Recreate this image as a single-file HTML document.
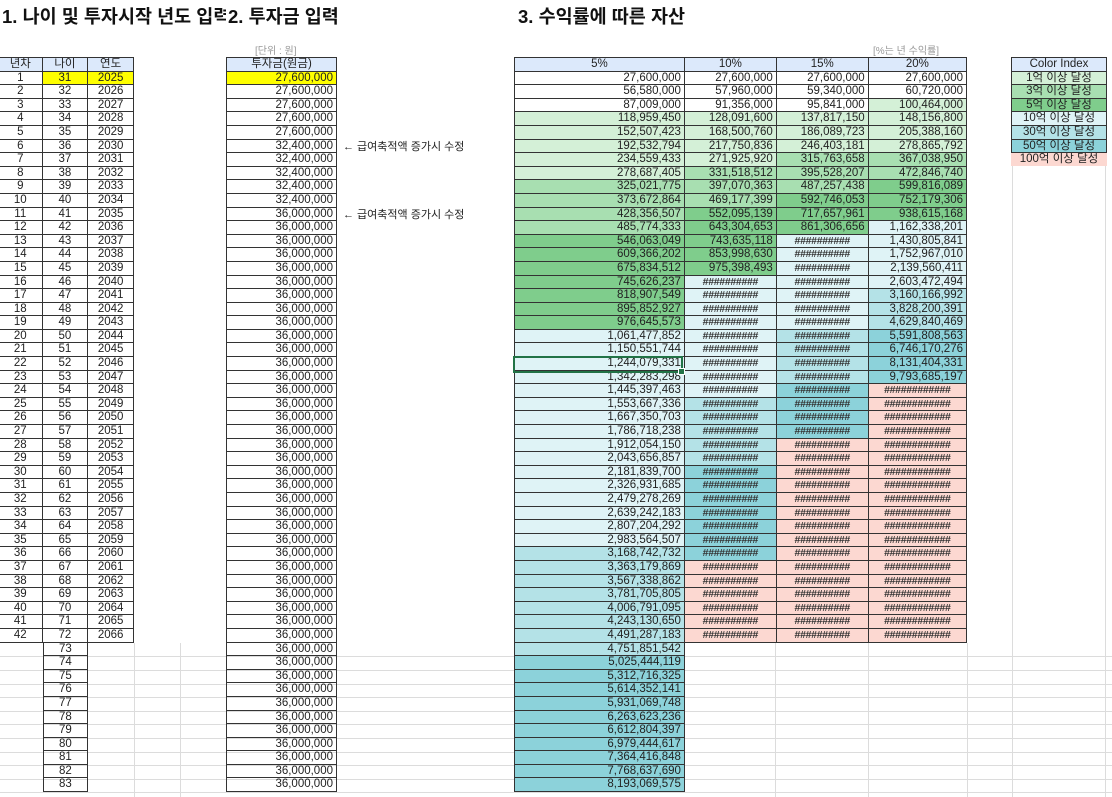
<!DOCTYPE html>
<html><head><meta charset="utf-8">
<style>
*{margin:0;padding:0;box-sizing:content-box}
body{width:1112px;height:797px;background:#fff;position:relative;overflow:hidden;font-family:"Liberation Sans","Noto Sans CJK KR",sans-serif;color:#222}
.t{position:absolute;font-weight:bold;font-size:18.5px;top:3px;white-space:nowrap;color:#111;font-family:"Liberation Sans","Noto Sans CJK KR",sans-serif}
.n{position:absolute;font-size:10px;color:#999;white-space:nowrap}
table{position:absolute;border-collapse:separate;border-spacing:0;table-layout:fixed;font-size:11.5px}
td{height:12.6px;line-height:12.6px;padding:0 3px;border-right:1px solid #333;border-bottom:1px solid #333;white-space:nowrap;overflow:hidden;text-align:right}
tr:first-child td{border-top:1px solid #333}
td:first-child{border-left:1px solid #333}
.h td{background:#dce9fb;text-align:center}
.c td{text-align:center}
.y{background:#ffff00}
.e{border:none!important;background:transparent!important}
.bl{border-left:1px solid #333}
.g1{background:#d4f0d7}.g2{background:#a8dfb1}.g3{background:#7fcd8c}
.c1{background:#dff3f6}.c2{background:#b4e2e7}.c3{background:#8cd2da}.p{background:#fcd8d1}
.hs td.x{text-align:center;letter-spacing:-0.3px;font-weight:bold;font-size:10.5px;color:#333}
.gl{position:absolute;background:#dcdcdc}
.ann{position:absolute;left:343px;font-size:11px;white-space:nowrap}
</style></head><body>
<div class="gl" style="left:0;top:656px;width:1112px;height:1px"></div>
<div class="gl" style="left:0;top:670px;width:1112px;height:1px"></div>
<div class="gl" style="left:0;top:684px;width:1112px;height:1px"></div>
<div class="gl" style="left:0;top:697px;width:1112px;height:1px"></div>
<div class="gl" style="left:0;top:711px;width:1112px;height:1px"></div>
<div class="gl" style="left:0;top:724px;width:1112px;height:1px"></div>
<div class="gl" style="left:0;top:738px;width:1112px;height:1px"></div>
<div class="gl" style="left:0;top:752px;width:1112px;height:1px"></div>
<div class="gl" style="left:0;top:765px;width:1112px;height:1px"></div>
<div class="gl" style="left:0;top:779px;width:1112px;height:1px"></div>
<div class="gl" style="left:0;top:792px;width:1112px;height:1px"></div>
<div class="gl" style="left:134px;top:643px;width:1px;height:154px"></div>
<div class="gl" style="left:180px;top:643px;width:1px;height:154px"></div>
<div class="gl" style="left:775px;top:643px;width:1px;height:154px"></div>
<div class="gl" style="left:868px;top:643px;width:1px;height:154px"></div>
<div class="gl" style="left:967px;top:643px;width:1px;height:154px"></div>
<div class="gl" style="left:1012px;top:160px;width:1px;height:637px"></div>
<div class="gl" style="left:1105px;top:160px;width:1px;height:637px"></div>

<div class="t" style="left:2px;width:224px;overflow:hidden">1. 나이 및 투자시작 년도 입력</div>
<div class="t" style="left:228px">2. 투자금 입력</div>
<div class="t" style="left:518px">3. 수익률에 따른 자산</div>
<div class="n" style="left:255px;top:42px">[단위 : 원]</div>
<div class="n" style="left:873px;top:42px">[%는 년 수익률]</div>
<div class="ann" style="top:138px">← 급여축적액 증가시 수정</div>
<div class="ann" style="top:206px">← 급여축적액 증가시 수정</div>

<table class="c" style="left:-2px;top:57px;width:136px">
<colgroup><col style="width:38px"><col style="width:39px"><col style="width:39px"></colgroup>
<tr class="h"><td>년차</td><td>나이</td><td>연도</td></tr>
<tr><td>1</td><td class="y">31</td><td class="y">2025</td></tr>
<tr><td>2</td><td>32</td><td>2026</td></tr><tr><td>3</td><td>33</td><td>2027</td></tr><tr><td>4</td><td>34</td><td>2028</td></tr><tr><td>5</td><td>35</td><td>2029</td></tr><tr><td>6</td><td>36</td><td>2030</td></tr><tr><td>7</td><td>37</td><td>2031</td></tr><tr><td>8</td><td>38</td><td>2032</td></tr><tr><td>9</td><td>39</td><td>2033</td></tr><tr><td>10</td><td>40</td><td>2034</td></tr><tr><td>11</td><td>41</td><td>2035</td></tr><tr><td>12</td><td>42</td><td>2036</td></tr><tr><td>13</td><td>43</td><td>2037</td></tr><tr><td>14</td><td>44</td><td>2038</td></tr><tr><td>15</td><td>45</td><td>2039</td></tr><tr><td>16</td><td>46</td><td>2040</td></tr><tr><td>17</td><td>47</td><td>2041</td></tr><tr><td>18</td><td>48</td><td>2042</td></tr><tr><td>19</td><td>49</td><td>2043</td></tr><tr><td>20</td><td>50</td><td>2044</td></tr><tr><td>21</td><td>51</td><td>2045</td></tr><tr><td>22</td><td>52</td><td>2046</td></tr><tr><td>23</td><td>53</td><td>2047</td></tr><tr><td>24</td><td>54</td><td>2048</td></tr><tr><td>25</td><td>55</td><td>2049</td></tr><tr><td>26</td><td>56</td><td>2050</td></tr><tr><td>27</td><td>57</td><td>2051</td></tr><tr><td>28</td><td>58</td><td>2052</td></tr><tr><td>29</td><td>59</td><td>2053</td></tr><tr><td>30</td><td>60</td><td>2054</td></tr><tr><td>31</td><td>61</td><td>2055</td></tr><tr><td>32</td><td>62</td><td>2056</td></tr><tr><td>33</td><td>63</td><td>2057</td></tr><tr><td>34</td><td>64</td><td>2058</td></tr><tr><td>35</td><td>65</td><td>2059</td></tr><tr><td>36</td><td>66</td><td>2060</td></tr><tr><td>37</td><td>67</td><td>2061</td></tr><tr><td>38</td><td>68</td><td>2062</td></tr><tr><td>39</td><td>69</td><td>2063</td></tr><tr><td>40</td><td>70</td><td>2064</td></tr><tr><td>41</td><td>71</td><td>2065</td></tr><tr><td>42</td><td>72</td><td>2066</td></tr>
<tr><td class="e"></td><td class="bl">73</td><td class="e"></td></tr><tr><td class="e"></td><td class="bl">74</td><td class="e"></td></tr><tr><td class="e"></td><td class="bl">75</td><td class="e"></td></tr><tr><td class="e"></td><td class="bl">76</td><td class="e"></td></tr><tr><td class="e"></td><td class="bl">77</td><td class="e"></td></tr><tr><td class="e"></td><td class="bl">78</td><td class="e"></td></tr><tr><td class="e"></td><td class="bl">79</td><td class="e"></td></tr><tr><td class="e"></td><td class="bl">80</td><td class="e"></td></tr><tr><td class="e"></td><td class="bl">81</td><td class="e"></td></tr><tr><td class="e"></td><td class="bl">82</td><td class="e"></td></tr><tr><td class="e"></td><td class="bl">83</td><td class="e"></td></tr>
</table>

<table style="left:226px;top:57px;width:111px">
<colgroup><col style="width:103px"></colgroup>
<tr class="h"><td>투자금(원금)</td></tr>
<tr><td class="y">27,600,000</td></tr><tr><td>27,600,000</td></tr><tr><td>27,600,000</td></tr><tr><td>27,600,000</td></tr><tr><td>27,600,000</td></tr>
<tr><td>32,400,000</td></tr><tr><td>32,400,000</td></tr><tr><td>32,400,000</td></tr><tr><td>32,400,000</td></tr><tr><td>32,400,000</td></tr>
<tr><td>36,000,000</td></tr><tr><td>36,000,000</td></tr><tr><td>36,000,000</td></tr><tr><td>36,000,000</td></tr><tr><td>36,000,000</td></tr><tr><td>36,000,000</td></tr><tr><td>36,000,000</td></tr><tr><td>36,000,000</td></tr><tr><td>36,000,000</td></tr><tr><td>36,000,000</td></tr><tr><td>36,000,000</td></tr><tr><td>36,000,000</td></tr><tr><td>36,000,000</td></tr><tr><td>36,000,000</td></tr><tr><td>36,000,000</td></tr><tr><td>36,000,000</td></tr><tr><td>36,000,000</td></tr><tr><td>36,000,000</td></tr><tr><td>36,000,000</td></tr><tr><td>36,000,000</td></tr><tr><td>36,000,000</td></tr><tr><td>36,000,000</td></tr><tr><td>36,000,000</td></tr><tr><td>36,000,000</td></tr><tr><td>36,000,000</td></tr><tr><td>36,000,000</td></tr><tr><td>36,000,000</td></tr><tr><td>36,000,000</td></tr><tr><td>36,000,000</td></tr><tr><td>36,000,000</td></tr><tr><td>36,000,000</td></tr><tr><td>36,000,000</td></tr><tr><td>36,000,000</td></tr><tr><td>36,000,000</td></tr><tr><td>36,000,000</td></tr><tr><td>36,000,000</td></tr><tr><td>36,000,000</td></tr><tr><td>36,000,000</td></tr><tr><td>36,000,000</td></tr><tr><td>36,000,000</td></tr><tr><td>36,000,000</td></tr><tr><td>36,000,000</td></tr><tr><td>36,000,000</td></tr>
</table>

<table class="hs" style="left:514px;top:57px;width:453px">
<colgroup><col style="width:160px"><col style="width:86px"><col style="width:86px"><col style="width:92px"></colgroup>
<tr class="h"><td>5%</td><td>10%</td><td>15%</td><td>20%</td></tr>
<tr><td>27,600,000</td><td>27,600,000</td><td>27,600,000</td><td>27,600,000</td></tr>
<tr><td>56,580,000</td><td>57,960,000</td><td>59,340,000</td><td>60,720,000</td></tr>
<tr><td>87,009,000</td><td>91,356,000</td><td>95,841,000</td><td class="g1">100,464,000</td></tr>
<tr><td class="g1">118,959,450</td><td class="g1">128,091,600</td><td class="g1">137,817,150</td><td class="g1">148,156,800</td></tr>
<tr><td class="g1">152,507,423</td><td class="g1">168,500,760</td><td class="g1">186,089,723</td><td class="g1">205,388,160</td></tr>
<tr><td class="g1">192,532,794</td><td class="g1">217,750,836</td><td class="g1">246,403,181</td><td class="g1">278,865,792</td></tr>
<tr><td class="g1">234,559,433</td><td class="g1">271,925,920</td><td class="g2">315,763,658</td><td class="g2">367,038,950</td></tr>
<tr><td class="g1">278,687,405</td><td class="g2">331,518,512</td><td class="g2">395,528,207</td><td class="g2">472,846,740</td></tr>
<tr><td class="g2">325,021,775</td><td class="g2">397,070,363</td><td class="g2">487,257,438</td><td class="g3">599,816,089</td></tr>
<tr><td class="g2">373,672,864</td><td class="g2">469,177,399</td><td class="g3">592,746,053</td><td class="g3">752,179,306</td></tr>
<tr><td class="g2">428,356,507</td><td class="g3">552,095,139</td><td class="g3">717,657,961</td><td class="g3">938,615,168</td></tr>
<tr><td class="g2">485,774,333</td><td class="g3">643,304,653</td><td class="g3">861,306,656</td><td class="c1">1,162,338,201</td></tr>
<tr><td class="g3">546,063,049</td><td class="g3">743,635,118</td><td class="c1 x">##########</td><td class="c1">1,430,805,841</td></tr>
<tr><td class="g3">609,366,202</td><td class="g3">853,998,630</td><td class="c1 x">##########</td><td class="c1">1,752,967,010</td></tr>
<tr><td class="g3">675,834,512</td><td class="g3">975,398,493</td><td class="c1 x">##########</td><td class="c1">2,139,560,411</td></tr>
<tr><td class="g3">745,626,237</td><td class="c1 x">##########</td><td class="c1 x">##########</td><td class="c1">2,603,472,494</td></tr>
<tr><td class="g3">818,907,549</td><td class="c1 x">##########</td><td class="c1 x">##########</td><td class="c2">3,160,166,992</td></tr>
<tr><td class="g3">895,852,927</td><td class="c1 x">##########</td><td class="c1 x">##########</td><td class="c2">3,828,200,391</td></tr>
<tr><td class="g3">976,645,573</td><td class="c1 x">##########</td><td class="c1 x">##########</td><td class="c2">4,629,840,469</td></tr>
<tr><td class="c1">1,061,477,852</td><td class="c1 x">##########</td><td class="c2 x">##########</td><td class="c3">5,591,808,563</td></tr>
<tr><td class="c1">1,150,551,744</td><td class="c1 x">##########</td><td class="c2 x">##########</td><td class="c3">6,746,170,276</td></tr>
<tr><td class="c1">1,244,079,331</td><td class="c1 x">##########</td><td class="c2 x">##########</td><td class="c3">8,131,404,331</td></tr>
<tr><td class="c1">1,342,283,298</td><td class="c1 x">##########</td><td class="c2 x">##########</td><td class="c3">9,793,685,197</td></tr>
<tr><td class="c1">1,445,397,463</td><td class="c1 x">##########</td><td class="c3 x">##########</td><td class="p x">############</td></tr>
<tr><td class="c1">1,553,667,336</td><td class="c2 x">##########</td><td class="c3 x">##########</td><td class="p x">############</td></tr>
<tr><td class="c1">1,667,350,703</td><td class="c2 x">##########</td><td class="c3 x">##########</td><td class="p x">############</td></tr>
<tr><td class="c1">1,786,718,238</td><td class="c2 x">##########</td><td class="c3 x">##########</td><td class="p x">############</td></tr>
<tr><td class="c1">1,912,054,150</td><td class="c2 x">##########</td><td class="p x">##########</td><td class="p x">############</td></tr>
<tr><td class="c1">2,043,656,857</td><td class="c2 x">##########</td><td class="p x">##########</td><td class="p x">############</td></tr>
<tr><td class="c1">2,181,839,700</td><td class="c3 x">##########</td><td class="p x">##########</td><td class="p x">############</td></tr>
<tr><td class="c1">2,326,931,685</td><td class="c3 x">##########</td><td class="p x">##########</td><td class="p x">############</td></tr>
<tr><td class="c1">2,479,278,269</td><td class="c3 x">##########</td><td class="p x">##########</td><td class="p x">############</td></tr>
<tr><td class="c1">2,639,242,183</td><td class="c3 x">##########</td><td class="p x">##########</td><td class="p x">############</td></tr>
<tr><td class="c1">2,807,204,292</td><td class="c3 x">##########</td><td class="p x">##########</td><td class="p x">############</td></tr>
<tr><td class="c1">2,983,564,507</td><td class="c3 x">##########</td><td class="p x">##########</td><td class="p x">############</td></tr>
<tr><td class="c2">3,168,742,732</td><td class="c3 x">##########</td><td class="p x">##########</td><td class="p x">############</td></tr>
<tr><td class="c2">3,363,179,869</td><td class="p x">##########</td><td class="p x">##########</td><td class="p x">############</td></tr>
<tr><td class="c2">3,567,338,862</td><td class="p x">##########</td><td class="p x">##########</td><td class="p x">############</td></tr>
<tr><td class="c2">3,781,705,805</td><td class="p x">##########</td><td class="p x">##########</td><td class="p x">############</td></tr>
<tr><td class="c2">4,006,791,095</td><td class="p x">##########</td><td class="p x">##########</td><td class="p x">############</td></tr>
<tr><td class="c2">4,243,130,650</td><td class="p x">##########</td><td class="p x">##########</td><td class="p x">############</td></tr>
<tr><td class="c2">4,491,287,183</td><td class="p x">##########</td><td class="p x">##########</td><td class="p x">############</td></tr>
<tr><td class="c2">4,751,851,542</td><td class="e"></td><td class="e"></td><td class="e"></td></tr>
<tr><td class="c3">5,025,444,119</td><td class="e"></td><td class="e"></td><td class="e"></td></tr>
<tr><td class="c3">5,312,716,325</td><td class="e"></td><td class="e"></td><td class="e"></td></tr>
<tr><td class="c3">5,614,352,141</td><td class="e"></td><td class="e"></td><td class="e"></td></tr>
<tr><td class="c3">5,931,069,748</td><td class="e"></td><td class="e"></td><td class="e"></td></tr>
<tr><td class="c3">6,263,623,236</td><td class="e"></td><td class="e"></td><td class="e"></td></tr>
<tr><td class="c3">6,612,804,397</td><td class="e"></td><td class="e"></td><td class="e"></td></tr>
<tr><td class="c3">6,979,444,617</td><td class="e"></td><td class="e"></td><td class="e"></td></tr>
<tr><td class="c3">7,364,416,848</td><td class="e"></td><td class="e"></td><td class="e"></td></tr>
<tr><td class="c3">7,768,637,690</td><td class="e"></td><td class="e"></td><td class="e"></td></tr>
<tr><td class="c3">8,193,069,575</td><td class="e"></td><td class="e"></td><td class="e"></td></tr>
</table>
<div style="position:absolute;left:513px;top:356px;width:166px;height:13px;border:2px solid #217346"></div>
<div style="position:absolute;left:678px;top:368px;width:5px;height:5px;background:#217346;border:1px solid #fff"></div>

<table class="c" style="left:1011px;top:57px;width:96px">
<colgroup><col style="width:88px"></colgroup>
<tr class="h"><td>Color Index</td></tr>
<tr><td class="g1">1억 이상 달성</td></tr>
<tr><td class="g2">3억 이상 달성</td></tr>
<tr><td class="g3">5억 이상 달성</td></tr>
<tr><td class="c1">10억 이상 달성</td></tr>
<tr><td class="c2">30억 이상 달성</td></tr>
<tr><td class="c3">50억 이상 달성</td></tr>
<tr><td class="p" style="border:none;padding:0 2px">100억 이상 달성</td></tr>
</table>
</body></html>
